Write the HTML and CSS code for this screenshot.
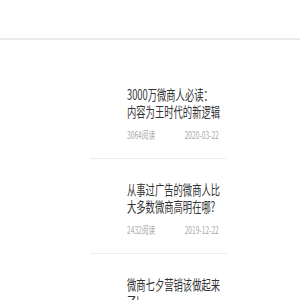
FILE: index.html
```html
<!DOCTYPE html>
<html lang="zh-CN">
<head>
<meta charset="UTF-8">
<meta name="viewport" content="width=device-width, initial-scale=1.0">
<title>微商文章列表</title>
<link rel="stylesheet" href="styles.css">
</head>
<body>
    <!-- En-tête vide -->
    <div class="header"></div>

    <!-- Liste des articles -->
    <ul class="list">
        <li class="item">
            <div class="item-body">
                <p class="title">3000万微商人必读：内容为王时代的新逻辑</p>
                <div class="meta">
                    <span>3064阅读</span>
                    <span>2020-03-22</span>
                </div>
            </div>
        </li>
        <li class="item">
            <div class="item-body">
                <p class="title">从事过广告的微商人比大多数微商高明在哪?</p>
                <div class="meta">
                    <span>2432阅读</span>
                    <span>2019-12-22</span>
                </div>
            </div>
        </li>
        <li class="item">
            <div class="item-body">
                <p class="title">微商七夕营销该做起来了!</p>
                <div class="meta">
                    <span>1987阅读</span>
                    <span>2019-08-05</span>
                </div>
            </div>
        </li>
    </ul>
</body>
</html>
```
FILE: styles.css
```css
/* Styles généraux */
body {
    margin: 0;
    padding: 0;
    background: #fff;
    font-family: "Noto Sans CJK SC", "Noto Sans", sans-serif;
    overflow: hidden;
}

.header {
    height: 38px;
    border-bottom: 2px solid #ebebeb;
}

/* Liste */
.list {
    list-style: none;
    margin: 0 0 0 90px;
    padding: 24px 0 0 0;
    width: 137px;
}

.item {
    padding: 22px 0 17px 37px;
    border-bottom: 1px solid #eeeeee;
}

/* le texte est étroit dans la maquette */
.item-body {
    width: 142px;
    transform: scaleX(0.665);
    transform-origin: left top;
}

.title {
    margin: 0;
    font-size: 14px;
    line-height: 17px;
    color: #333;
}

.meta {
    display: flex;
    justify-content: space-between;
    margin-top: 8px;
    margin-bottom: -1px;
    padding-right: 4px;
    font-size: 10px;
    line-height: 14px;
    color: #aaa;
}
```
